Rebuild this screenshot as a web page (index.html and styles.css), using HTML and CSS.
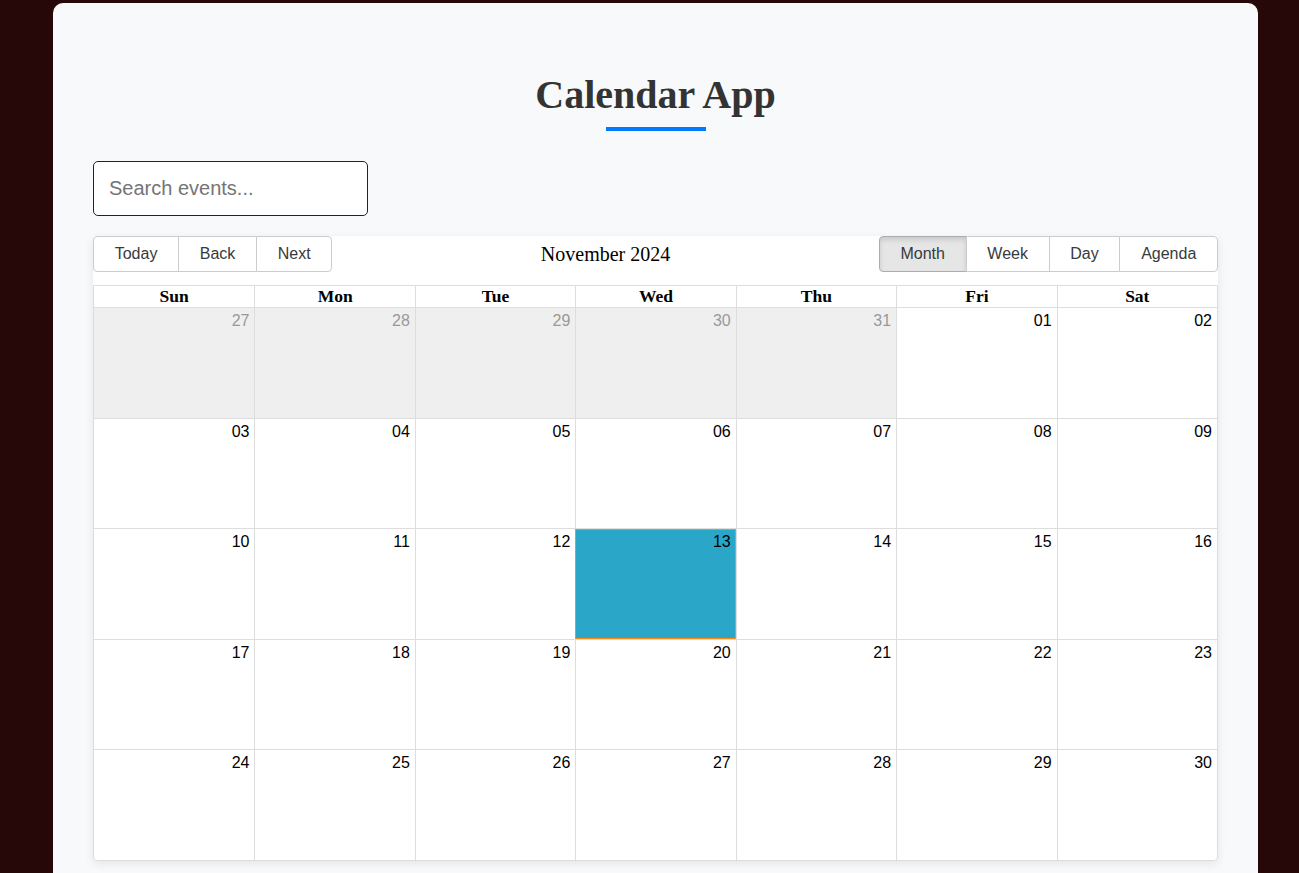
FILE: index.html
```html
<!DOCTYPE html>
<html lang="en">
<head>
<meta charset="utf-8">
<title>Calendar App</title>
<link rel="stylesheet" href="styles.css">
</head>
<body>
<div class="app">
  <h1 class="title">Calendar App</h1>
  <div class="title-bar"></div>
  <input class="search" type="text" placeholder="Search events...">
  <div class="calendar">
    <div class="toolbar">
      <div class="btn-group">
        <button class="btn">Today</button><button class="btn">Back</button><button class="btn">Next</button>
      </div>
      <div class="label">November 2024</div>
      <div class="btn-group">
        <button class="btn active">Month</button><button class="btn">Week</button><button class="btn">Day</button><button class="btn">Agenda</button>
      </div>
    </div>
    <div class="month">
      <div class="head">
        <div class="hcell">Sun</div><div class="hcell">Mon</div><div class="hcell">Tue</div><div class="hcell">Wed</div><div class="hcell">Thu</div><div class="hcell">Fri</div><div class="hcell">Sat</div>
      </div>
      <div class="week w1">
        <div class="day off">27</div><div class="day off">28</div><div class="day off">29</div><div class="day off">30</div><div class="day off">31</div><div class="day">01</div><div class="day">02</div>
      </div>
      <div class="week w2">
        <div class="day">03</div><div class="day">04</div><div class="day">05</div><div class="day">06</div><div class="day">07</div><div class="day">08</div><div class="day">09</div>
      </div>
      <div class="week w3">
        <div class="day">10</div><div class="day">11</div><div class="day">12</div><div class="day today">13</div><div class="day">14</div><div class="day">15</div><div class="day">16</div>
      </div>
      <div class="week w4">
        <div class="day">17</div><div class="day">18</div><div class="day">19</div><div class="day">20</div><div class="day">21</div><div class="day">22</div><div class="day">23</div>
      </div>
      <div class="week w5">
        <div class="day">24</div><div class="day">25</div><div class="day">26</div><div class="day">27</div><div class="day">28</div><div class="day">29</div><div class="day">30</div>
      </div>
    </div>
  </div>
</div>
</body>
</html>
```

FILE: styles.css
```css
html, body {
  margin: 0;
  padding: 0;
}
body {
  background: #260808;
  font-family: "Liberation Serif", "Times New Roman", serif;
  overflow: hidden;
  height: 873px;
}
.app {
  margin: 3px 0 0 53px;
  width: 1125px;
  padding: 40px 40px 40px;
  background: #f8f9fa;
  border-radius: 10px;
  min-height: 900px;
}
.title {
  margin: 29px 0 0;
  font-size: 40px;
  line-height: 46px;
  text-align: center;
  color: #333;
  font-weight: bold;
}
.title-bar {
  width: 100px;
  height: 4px;
  background: #007bff;
  margin: 9px auto 0;
}
.search {
  display: block;
  box-sizing: border-box;
  margin-top: 30px;
  width: 275px;
  height: 55px;
  padding: 15px;
  border: 1px solid #222;
  border-radius: 5px;
  font-family: "Liberation Sans", Arial, sans-serif;
  font-size: 20px;
  background: #fff;
  outline: none;
}
.search::placeholder {
  color: #757575;
}
.calendar {
  margin-top: 20px;
  background: #fff;
  border-radius: 4px;
  box-shadow: 0 3px 10px rgba(0, 0, 0, 0.08);
}
.toolbar {
  display: flex;
  align-items: center;
  margin-bottom: 13px;
  background: #f8f9fa;
}
.btn-group {
  display: flex;
  background: #fff;
}
.label {
  flex: 1;
  text-align: center;
  font-size: 20px;
  color: #000;
  background: #fff;
  align-self: stretch;
  display: flex;
  align-items: center;
  justify-content: center;
  padding-top: 1px;
}
.btn {
  font-family: "Liberation Sans", Arial, sans-serif;
  font-size: 16px;
  line-height: 18px;
  color: #373a3c;
  background: #fff;
  border: 1px solid #ccc;
  padding: 8px 20.7px;
  margin: 0;
  margin-left: -1px;
  border-radius: 0;
  cursor: pointer;
}
.btn:first-child {
  margin-left: 0;
  border-radius: 4px 0 0 4px;
}
.btn:last-child {
  border-radius: 0 4px 4px 0;
}
.btn.active {
  background: #e6e6e6;
  border-color: #adadad;
  box-shadow: inset 0 3px 5px rgba(0, 0, 0, 0.125);
}
.month {
  border: 1px solid #ddd;
  border-radius: 0 0 4px 4px;
  overflow: hidden;
  background: #fff;
}
.head {
  display: grid;
  grid-template-columns: repeat(7, 1fr);
  border-bottom: 1px solid #ddd;
}
.hcell {
  height: 21px;
  line-height: 21px;
  text-align: center;
  font-weight: bold;
  font-size: 17.5px;
  color: #000;
  border-left: 1px solid #ddd;
}
.hcell:first-child {
  border-left: none;
}
.week {
  display: grid;
  grid-template-columns: repeat(7, 1fr);
  border-top: 1px solid #ddd;
  box-sizing: border-box;
}
.week.w1 {
  border-top: none;
  height: 110px;
}
.week.w2 {
  height: 110px;
}
.week.w3 {
  height: 111px;
}
.week.w4 {
  height: 110px;
}
.week.w5 {
  height: 111px;
}
.day {
  border-left: 1px solid #ddd;
  text-align: right;
  padding: 3px 5px 0 0;
  font-family: "Liberation Sans", Arial, sans-serif;
  font-size: 16px;
  line-height: 20px;
  color: #000;
}
.day:first-child {
  border-left: none;
}
.day.off {
  background: #efefef;
  color: #999;
}
.day.today {
  background: #2aa6c9;
  outline: 1px solid #ff8c1a;
  outline-offset: -1px;
}
```
